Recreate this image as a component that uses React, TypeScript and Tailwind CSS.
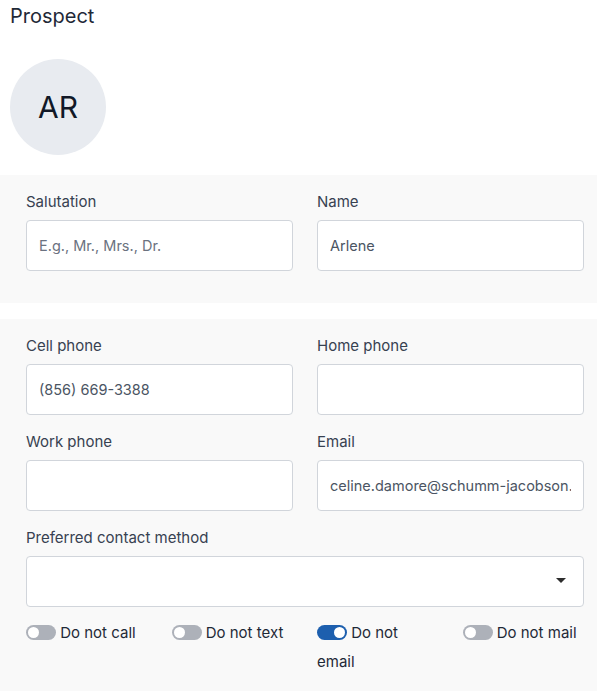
import { useState } from 'react';

type ToggleItem = { key: string; label: string };

const toggles: ToggleItem[] = [
  { key: 'call', label: 'Do not call' },
  { key: 'text', label: 'Do not text' },
  { key: 'email', label: 'Do not email' },
  { key: 'mail', label: 'Do not mail' },
];

function Field({ label, value, placeholder }: { label: string; value?: string; placeholder?: string }) {
  return (
    <label className="flex flex-col gap-2">
      <span className="text-[15px] leading-5 text-[#374151]">{label}</span>
      <input
        className="h-[51px] w-full rounded border border-[#d1d5db] bg-white px-3 text-[14.5px] text-[#4b5563] placeholder:text-[#6b7280] outline-none"
        defaultValue={value}
        placeholder={placeholder}
      />
    </label>
  );
}

function Switch({ on, onChange }: { on: boolean; onChange: () => void }) {
  return (
    <button
      type="button"
      onClick={onChange}
      className={`relative inline-block h-[15px] w-[30px] rounded-full align-[-2px] ${on ? 'bg-[#1d5fae]' : 'bg-[#adb1b9]'}`}
    >
      <span
        className={`absolute top-[2px] h-[11px] w-[11px] rounded-full bg-white ${on ? 'left-[17px]' : 'left-[2px]'}`}
      />
    </button>
  );
}

export default function App() {
  const [flags, setFlags] = useState<Record<string, boolean>>({ email: true });

  return (
    <div className="min-h-screen bg-white text-[#1f2937]" style={{ fontFamily: 'Inter, "Noto Sans", sans-serif' }}>
      <div className="px-[10px] pt-[2px]">
        <h1 className="text-[20px] leading-7 text-[#1f2937]">Prospect</h1>
        <div className="mt-[29px] flex h-24 w-24 items-center justify-center rounded-full bg-[#e8ebf0] text-[30px] text-[#111827]">
          AR
        </div>
      </div>

      {/* naming */}
      <section className="mt-5 grid grid-cols-2 gap-6 bg-[#f9f9f9] pb-[32px] pl-[26px] pr-[13px] pt-[17px]">
        <Field label="Salutation" placeholder="E.g., Mr., Mrs., Dr." />
        <Field label="Name" value="Arlene" />
      </section>

      {/* contact details */}
      <section className="mt-4 bg-[#f9f9f9] pb-8 pl-[26px] pr-[13px] pt-[17px]">
        <div className="grid grid-cols-2 gap-x-6 gap-y-[17px]">
          <Field label="Cell phone" value="(856) 669-3388" />
          <Field label="Home phone" />
          <Field label="Work phone" />
          <Field label="Email" value="celine.damore@schumm-jacobson.com" />
          <label className="col-span-2 flex flex-col gap-2">
            <span className="text-[15px] leading-5 text-[#374151]">Preferred contact method</span>
            <div className="relative h-[51px] w-full rounded border border-[#d1d5db] bg-white">
              <svg className="absolute right-[17px] top-[21px]" width="10" height="5" viewBox="0 0 10 5">
                <path d="M0 0h10L5 5z" fill="#2d2d2d" />
              </svg>
            </div>
          </label>
        </div>
        <div className="mt-[11px] grid grid-cols-4 gap-x-6">
          {toggles.map((t) => (
            <div key={t.key} className="pr-[5px] text-[15px] leading-[29px] text-[#1f2937]">
              <Switch on={!!flags[t.key]} onChange={() => setFlags((f) => ({ ...f, [t.key]: !f[t.key] }))} />{' '}
              {t.label}
            </div>
          ))}
        </div>
      </section>
    </div>
  );
}
